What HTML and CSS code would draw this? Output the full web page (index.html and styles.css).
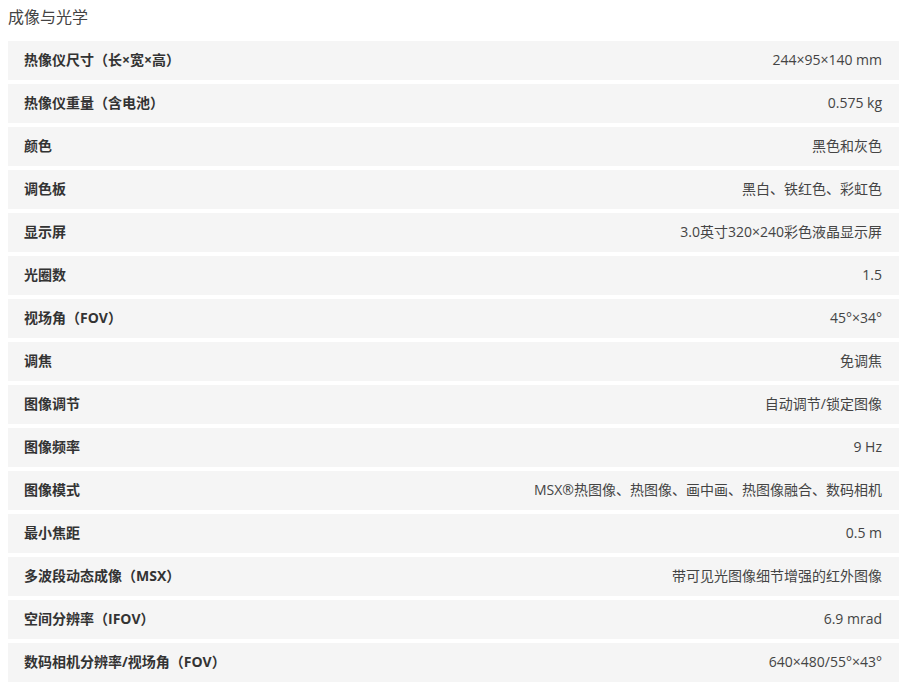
FILE: index.html
```html
<!DOCTYPE html>
<html lang="zh-CN">

<head>
  <meta charset="UTF-8" />
  <meta name="viewport" content="width=device-width, initial-scale=1.0" />
  <title>成像与光学</title>
  <link rel="stylesheet" href="styles.css">
</head>

<body>
  <!-- 规格表 -->
  <h3 class="titulo">成像与光学</h3>

  <ul class="specs">
    <li><span class="nome">热像仪尺寸（长×宽×高）</span><span class="valor">244×95×140 mm</span></li>
    <li><span class="nome">热像仪重量（含电池）</span><span class="valor">0.575 kg</span></li>
    <li><span class="nome">颜色</span><span class="valor">黑色和灰色</span></li>
    <li><span class="nome">调色板</span><span class="valor">黑白、铁红色、彩虹色</span></li>
    <li><span class="nome">显示屏</span><span class="valor">3.0英寸320×240彩色液晶显示屏</span></li>
    <li><span class="nome">光圈数</span><span class="valor">1.5</span></li>
    <li><span class="nome">视场角（FOV）</span><span class="valor">45°×34°</span></li>
    <li><span class="nome">调焦</span><span class="valor">免调焦</span></li>
    <li><span class="nome">图像调节</span><span class="valor">自动调节/锁定图像</span></li>
    <li><span class="nome">图像频率</span><span class="valor">9 Hz</span></li>
    <li><span class="nome">图像模式</span><span class="valor">MSX®热图像、热图像、画中画、热图像融合、数码相机</span></li>
    <li><span class="nome">最小焦距</span><span class="valor">0.5 m</span></li>
    <li><span class="nome">多波段动态成像（MSX）</span><span class="valor">带可见光图像细节增强的红外图像</span></li>
    <li><span class="nome">空间分辨率（IFOV）</span><span class="valor">6.9 mrad</span></li>
    <li><span class="nome">数码相机分辨率/视场角（FOV）</span><span class="valor">640×480/55°×43°</span></li>
  </ul>
</body>

</html>
```

FILE: styles.css
```css
body {
  margin: 0;
  padding: 8px 0 0 8px;
  font-family: "Open Sans", "Noto Sans CJK SC", sans-serif;
  color: #333;
}

.titulo {
  margin: 0;
  height: 33px;
  font-size: 16px;
  font-weight: normal;
  line-height: 19px;
  color: #444;
}

.specs {
  width: 891px;
  margin: 0;
  padding: 0;
  list-style-type: none;
  display: flex;
  flex-direction: column;
  gap: 4px;
}

.specs li {
  box-sizing: border-box;
  height: 39px;
  padding: 0 17px 3px 16px;
  display: flex;
  align-items: center;
  justify-content: space-between;
  background-color: #f5f5f5;
  font-size: 14px;
}

.nome {
  font-weight: bold;
  color: #333;
}

.valor {
  color: #444;
}
```
